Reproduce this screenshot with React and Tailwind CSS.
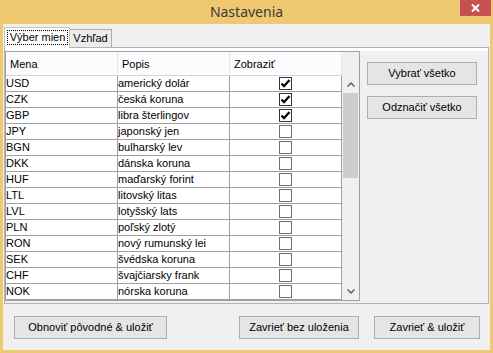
import React from 'react';

const rows = [
    ['USD', 'americký dolár', true],
    ['CZK', 'česká koruna', true],
    ['GBP', 'libra šterlingov', true],
    ['JPY', 'japonský jen', false],
    ['BGN', 'bulharský lev', false],
    ['DKK', 'dánska koruna', false],
    ['HUF', 'maďarský forint', false],
    ['LTL', 'litovský litas', false],
    ['LVL', 'lotyšský lats', false],
    ['PLN', 'poľský zlotý', false],
    ['RON', 'nový rumunský lei', false],
    ['SEK', 'švédska koruna', false],
    ['CHF', 'švajčiarsky frank', false],
    ['NOK', 'nórska koruna', false],
];

function CheckBox({ checked }) {
    return (
        <div className={`w-[13px] h-[13px] bg-white border ${checked ? 'border-[#333333]' : 'border-[#707070]'}`}>
            {checked && (
                <svg width="11" height="11" viewBox="0 0 11 11">
                    <path d="M1.5 5.5 L4 8.2 L9.5 2" fill="none" stroke="#000" strokeWidth="2.2" />
                </svg>
            )}
        </div>
    );
}

function Button({ children, className }) {
    return (
        <div className={`h-[23px] flex items-center justify-center bg-[#e5e5e5] border border-[#adadad] text-black ${className}`}>
            {children}
        </div>
    );
}

export default function App() {
    return (
        <div className="w-[493px] h-[353px] bg-[#efc86f] flex flex-col font-['Liberation_Sans',sans-serif] text-[11px] text-black">
            {/* title bar */}
            <div className="h-[24px] relative flex items-center justify-center pb-[1px]">
                <span className="font-['Noto_Sans',sans-serif] text-[14px] text-[#3a3a3a]">Nastavenia</span>
                <div className="absolute top-0 right-[2px] w-[31px] h-[16px] bg-[#c75050] flex items-center justify-center">
                    <svg width="9" height="8" viewBox="0 0 9 8">
                        <path d="M1 0.5 L8 7.5 M8 0.5 L1 7.5" stroke="#fff" strokeWidth="2" />
                    </svg>
                </div>
            </div>

            <div className="h-[326px] mx-[3px] bg-[#f0f0f0] flex flex-col">
                {/* tabs */}
                <div className="h-[23px] flex items-end">
                    <div className="relative z-10 ml-[1px] -mb-px w-[66px] h-[21px] bg-white border border-b-0 border-[#c4c4c4] pt-[2px] pl-[2px] pr-[1px]">
                        <div className="h-[15px] border border-dotted border-black flex items-center justify-center whitespace-nowrap">Výber mien</div>
                    </div>
                    <div className="w-[42px] h-[18px] bg-[#ececec] border border-b-0 border-l-0 border-[#adadad] flex items-center justify-center">Vzhľad</div>
                </div>

                {/* tab page */}
                <div className="mx-[1px] w-[485px] h-[257px] border border-[#b4b4b4] bg-[#f0f0f0]">
                    <div className="h-[3px] bg-white" />
                    <div className="flex">
                        {/* grid */}
                        <div className="w-[355px] h-[250px] border border-[#a0a0a0] bg-[#f0f0f0] flex flex-col">
                            <div className="flex h-[24px]">
                                {['Mena', 'Popis', 'Zobraziť'].map((h) => (
                                    <div key={h} className="w-[112px] h-[24px] bg-[#fbfcfe] border-r border-b border-r-[#e3e8ef] border-b-[#d5d5d5] pl-[4px] pt-[2px] flex items-center">
                                        {h}
                                    </div>
                                ))}
                            </div>
                            <div className="flex">
                                <div className="w-[336px]">
                                    {rows.map(([code, name, on]) => (
                                        <div key={code} className="flex h-[16px]">
                                            <div className="w-[112px] h-[16px] bg-white border-r border-b border-[#a0a0a0] leading-[15px]">{code}</div>
                                            <div className="w-[112px] h-[16px] bg-white border-r border-b border-[#a0a0a0] leading-[15px]">{name}</div>
                                            <div className="w-[112px] h-[16px] bg-white border-r border-b border-[#a0a0a0] flex items-center justify-center pb-px">
                                                <CheckBox checked={on} />
                                            </div>
                                        </div>
                                    ))}
                                </div>
                                {/* scrollbar */}
                                <div className="w-[17px] h-[224px] bg-[#f0f0f0] flex flex-col items-center">
                                    <div className="h-[17px] flex items-center justify-center">
                                        <svg width="8" height="5" viewBox="0 0 8 5">
                                            <path d="M0.5 4.5 L4 1 L7.5 4.5" fill="none" stroke="#606060" strokeWidth="1.5" />
                                        </svg>
                                    </div>
                                    <div className="w-[15px] h-[85px] bg-[#cdcdcd]" />
                                    <div className="flex-1" />
                                    <div className="h-[17px] flex items-center justify-center">
                                        <svg width="8" height="5" viewBox="0 0 8 5">
                                            <path d="M0.5 0.5 L4 4 L7.5 0.5" fill="none" stroke="#606060" strokeWidth="1.5" />
                                        </svg>
                                    </div>
                                </div>
                            </div>
                        </div>

                        {/* side buttons */}
                        <div className="ml-[7px] mt-[11px] flex flex-col gap-[11px]">
                            <Button className="w-[110px]">Vybrať všetko</Button>
                            <Button className="w-[110px]">Odznačiť všetko</Button>
                        </div>
                    </div>
                </div>

                {/* bottom buttons */}
                <div className="mt-[12px] pl-[11px] pr-[10px] flex">
                    <Button className="w-[153px]">Obnoviť pôvodné &amp; uložiť</Button>
                    <Button className="w-[120px] ml-auto">Zavrieť bez uloženia</Button>
                    <Button className="w-[106px] ml-[15px]">Zavrieť &amp; uložiť</Button>
                </div>
            </div>
        </div>
    );
}
